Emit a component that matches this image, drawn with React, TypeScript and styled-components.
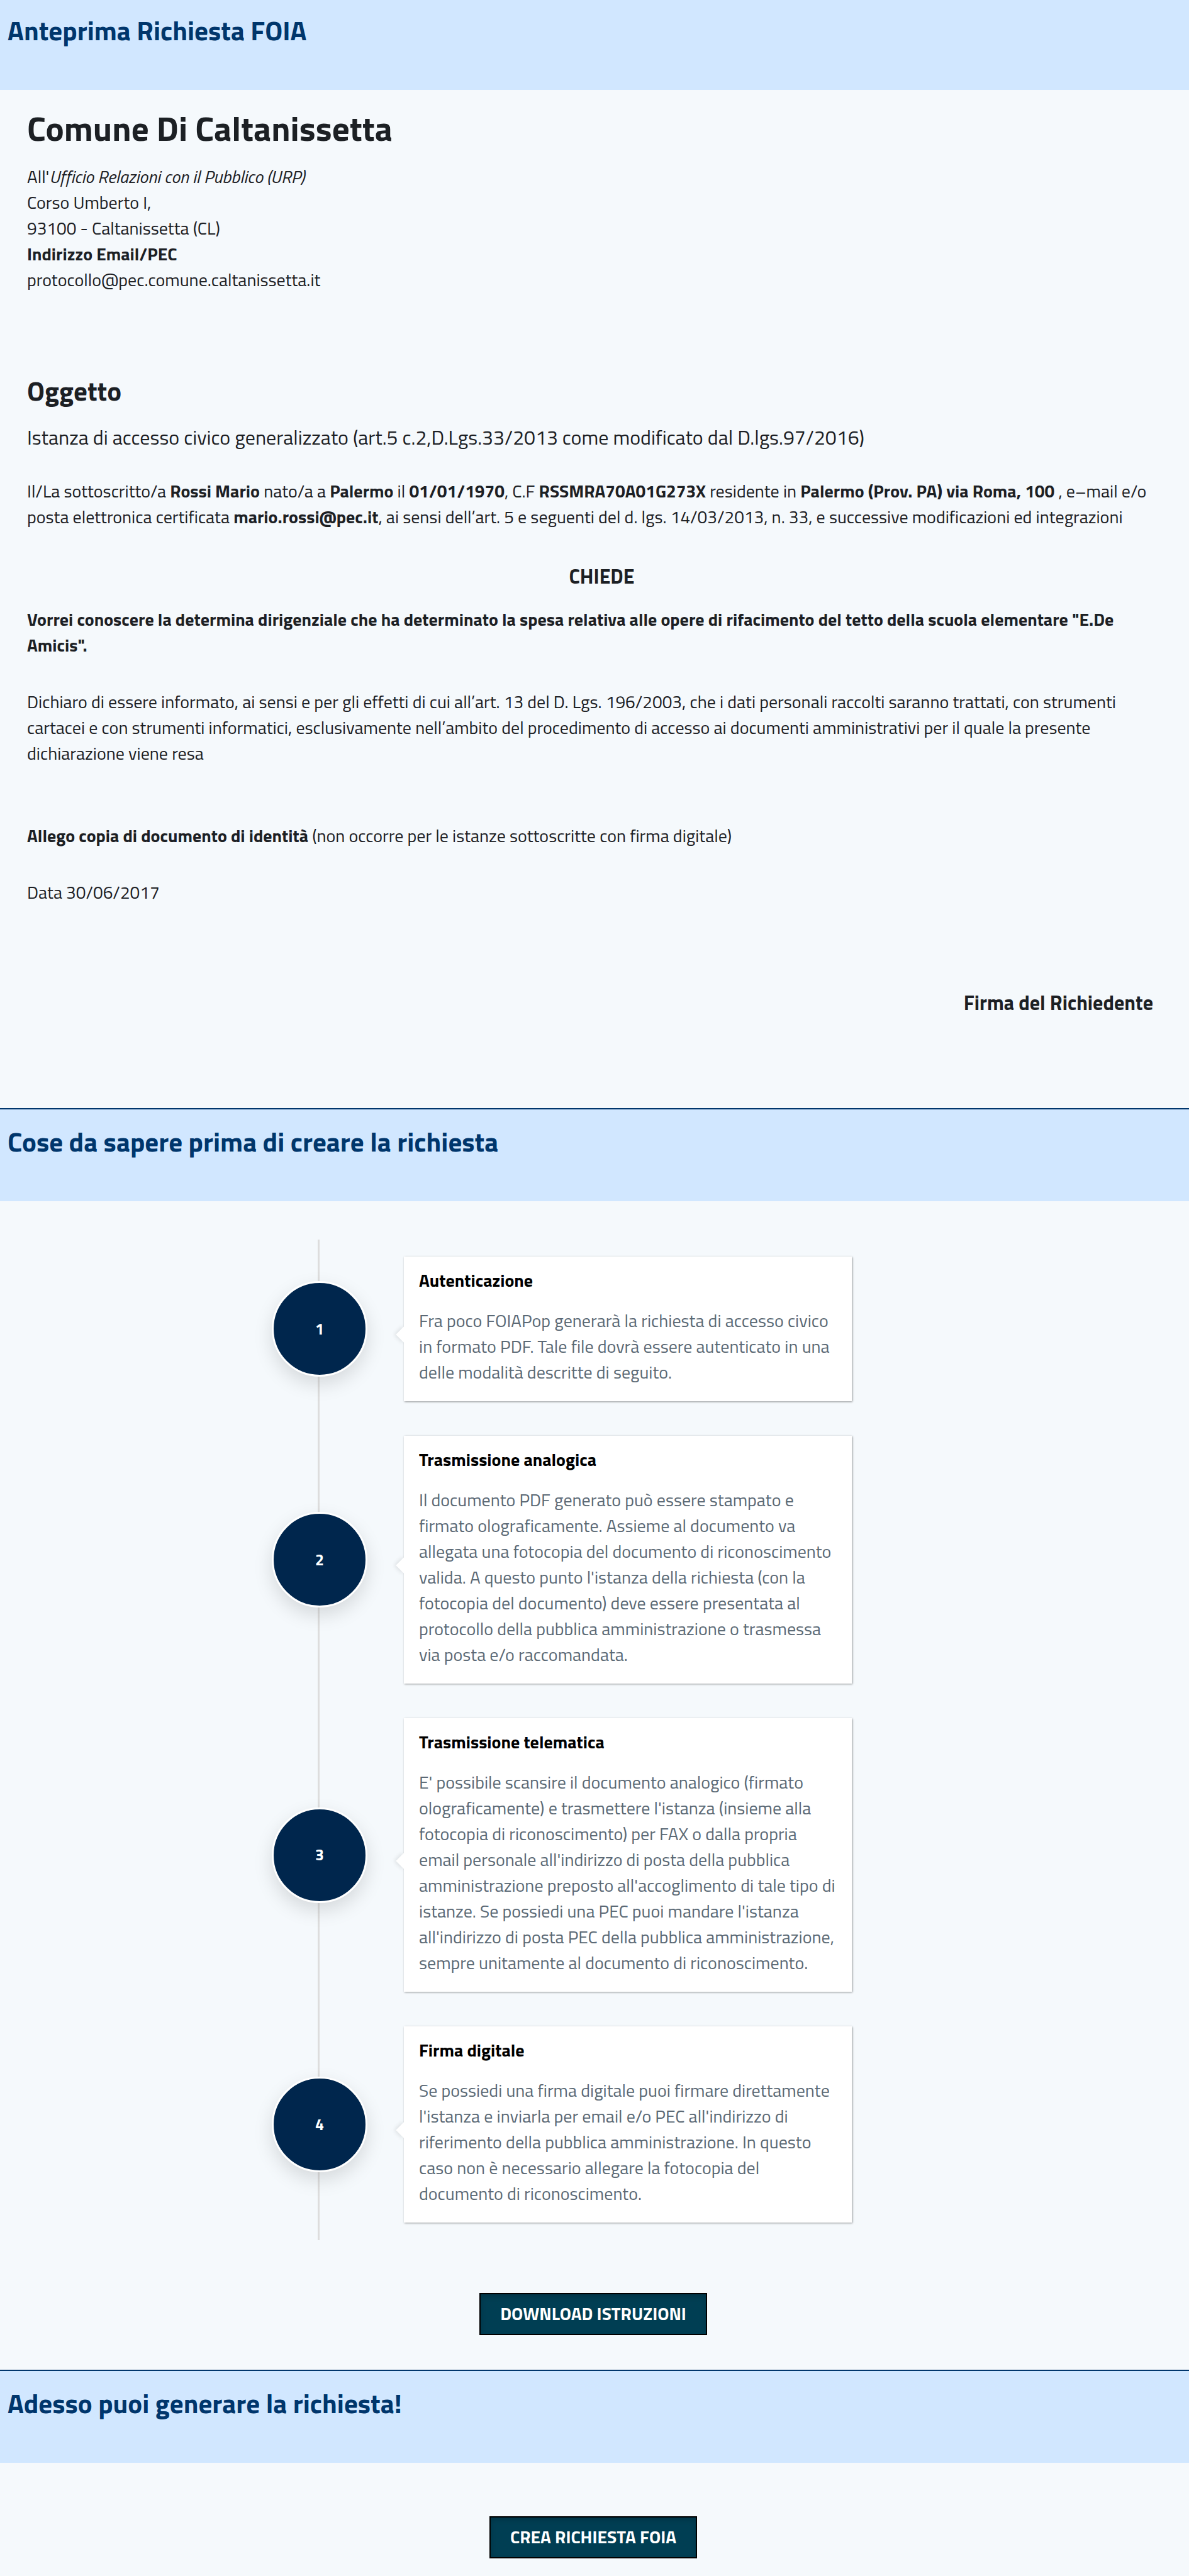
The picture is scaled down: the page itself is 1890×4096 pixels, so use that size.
import React from "react";
import styled, { createGlobalStyle } from "styled-components";

const GlobalStyle = createGlobalStyle`
  *, *::before, *::after { box-sizing: border-box; }
  body {
    margin: 0;
    background: #f5f9fc;
    color: #1c2024;
    font-family: "Titillium Web", Lato, "Open Sans", sans-serif;
    font-size: 28px;
    line-height: 41px;
  }
  h1, h2, h3, p, ol, address { margin: 0; padding: 0; }
  b { font-weight: 700; }
`;

const Banner = styled.header<{ $first?: boolean }>`
  padding: ${(p) => (p.$first ? "23px 12px 70px" : "26px 12px 70px")};
  border-top: ${(p) => (p.$first ? "0" : "2px solid #00366c")};
  background: #d1e7ff;
`;

const BannerTitle = styled.h2`
  color: #00366c;
  font-size: 43px;
  line-height: 50px;
  font-weight: 700;
`;

const Letter = styled.article`
  display: flex;
  flex-direction: column;
  padding: 26px 20px 147px 43px;
`;

const Recipient = styled.h1`
  margin-bottom: 22px;
  font-size: 55px;
  line-height: 69px;
  font-weight: 700;
`;

const Address = styled.address`
  margin-bottom: 130px;
  font-style: normal;
`;

const Subject = styled.h2`
  margin-bottom: 23px;
  font-size: 43px;
  line-height: 53px;
  font-weight: 700;
`;

const SubjectText = styled.p`
  margin-bottom: 41px;
  font-size: 32px;
  line-height: 48px;
`;

const Paragraph = styled.p<{ $gap: number; $bold?: boolean }>`
  margin-bottom: ${(p) => p.$gap}px;
  font-weight: ${(p) => (p.$bold ? 700 : 400)};
`;

const Claim = styled.h3`
  margin-bottom: 27px;
  font-size: 32px;
  line-height: 41px;
  font-weight: 700;
  text-align: center;
`;

const Signature = styled.p`
  padding-right: 37px;
  font-size: 32px;
  line-height: 41px;
  font-weight: 700;
  text-align: right;
`;

const Timeline = styled.ol`
  width: 1026px;
  margin: 61px auto 84px;
  list-style: none;
  background: linear-gradient(#dddddd, #dddddd) 73px 0 / 3px 100% no-repeat;
`;

const Step = styled.li`
  display: flex;
  align-items: center;
  gap: 58px;
  padding: 27px 104px 28px 0;
`;

const StepNumber = styled.span`
  display: flex;
  flex: none;
  align-items: center;
  justify-content: center;
  width: 152px;
  height: 152px;
  border: 3px solid #ffffff;
  border-radius: 50%;
  background: #00264d;
  box-shadow: 0 12px 30px rgba(0, 0, 0, 0.13);
  color: #ffffff;
  font-size: 25px;
  font-weight: 700;
`;

const Card = styled.section`
  position: relative;
  flex: 1;
  padding: 17px 24px 26px;
  background: #ffffff;
  box-shadow: 1px 1px 3px rgba(0, 0, 0, 0.4);

  &::before {
    content: "";
    position: absolute;
    top: 50%;
    left: -9px;
    width: 18px;
    height: 18px;
    background: #ffffff;
    box-shadow: -2px 2px 6px rgba(0, 0, 0, 0.1);
    clip-path: polygon(-12px -12px, 30px 30px, -12px 30px);
    transform: rotate(45deg);
  }
`;

const CardTitle = styled.h3`
  margin-bottom: 23px;
  color: #000000;
  font-size: 28px;
  line-height: 41px;
  font-weight: 700;
`;

const CardText = styled.p`
  color: #5b6975;
`;

const Actions = styled.div<{ $last?: boolean }>`
  display: flex;
  justify-content: center;
  padding: ${(p) => (p.$last ? "85px 4px 28px 0" : "0 4px 55px 0")};
`;

const ActionButton = styled.button`
  padding: 10px 31px 12px;
  border: 2px solid #000000;
  background: #003e53;
  box-shadow: inset 0 4px 8px rgba(0, 0, 0, 0.16);
  color: #ffffff;
  font-family: inherit;
  font-size: 28px;
  line-height: 41px;
  font-weight: 700;
  text-transform: uppercase;
  cursor: pointer;
`;

const steps = [
  {
    title: "Autenticazione",
    text: "Fra poco FOIAPop generarà la richiesta di accesso civico in formato PDF. Tale file dovrà essere autenticato in una delle modalità descritte di seguito.",
  },
  {
    title: "Trasmissione analogica",
    text: "Il documento PDF generato può essere stampato e firmato olograficamente. Assieme al documento va allegata una fotocopia del documento di riconoscimento valida. A questo punto l'istanza della richiesta (con la fotocopia del documento) deve essere presentata al protocollo della pubblica amministrazione o trasmessa via posta e/o raccomandata.",
  },
  {
    title: "Trasmissione telematica",
    text: "E' possibile scansire il documento analogico (firmato olograficamente) e trasmettere l'istanza (insieme alla fotocopia di riconoscimento) per FAX o dalla propria email personale all'indirizzo di posta della pubblica amministrazione preposto all'accoglimento di tale tipo di istanze. Se possiedi una PEC puoi mandare l'istanza all'indirizzo di posta PEC della pubblica amministrazione, sempre unitamente al documento di riconoscimento.",
  },
  {
    title: "Firma digitale",
    text: "Se possiedi una firma digitale puoi firmare direttamente l'istanza e inviarla per email e/o PEC all'indirizzo di riferimento della pubblica amministrazione. In questo caso non è necessario allegare la fotocopia del documento di riconoscimento.",
  },
];

export default function App() {
  return (
    <>
      <GlobalStyle />
      <main>
        <Banner $first>
          <BannerTitle>Anteprima Richiesta FOIA</BannerTitle>
        </Banner>
        <Letter>
          <Recipient>Comune Di Caltanissetta</Recipient>
          <Address>
            All'<i>Ufficio Relazioni con il Pubblico (URP)</i>
            <br />
            Corso Umberto I,
            <br />
            93100 - Caltanissetta (CL)
            <br />
            <b>Indirizzo Email/PEC</b>
            <br />
            protocollo@pec.comune.caltanissetta.it
          </Address>
          <Subject>Oggetto</Subject>
          <SubjectText>
            Istanza di accesso civico generalizzato (art.5 c.2,D.Lgs.33/2013 come modificato dal D.lgs.97/2016)
          </SubjectText>
          <Paragraph $gap={54}>
            Il/La sottoscritto/a <b>Rossi Mario</b> nato/a a <b>Palermo</b> il <b>01/01/1970</b>, C.F{" "}
            <b>RSSMRA70A01G273X</b> residente in <b>Palermo (Prov. PA) via Roma, 100</b> , e–mail e/o posta
            elettronica certificata <b>mario.rossi@pec.it</b>, ai sensi dell’art. 5 e seguenti del d. lgs.
            14/03/2013, n. 33, e successive modificazioni ed integrazioni
          </Paragraph>
          <Claim>CHIEDE</Claim>
          <Paragraph $gap={49} $bold>
            Vorrei conoscere la determina dirigenziale che ha determinato la spesa relativa alle opere di
            rifacimento del tetto della scuola elementare "E.De Amicis".
          </Paragraph>
          <Paragraph $gap={90}>
            Dichiaro di essere informato, ai sensi e per gli effetti di cui all’art. 13 del D. Lgs. 196/2003, che
            i dati personali raccolti saranno trattati, con strumenti cartacei e con strumenti informatici,
            esclusivamente nell’ambito del procedimento di accesso ai documenti amministrativi per il quale la
            presente dichiarazione viene resa
          </Paragraph>
          <Paragraph $gap={49}>
            <b>Allego copia di documento di identità</b> (non occorre per le istanze sottoscritte con firma
            digitale)
          </Paragraph>
          <Paragraph $gap={135}>Data 30/06/2017</Paragraph>
          <Signature>Firma del Richiedente</Signature>
        </Letter>

        <Banner>
          <BannerTitle>Cose da sapere prima di creare la richiesta</BannerTitle>
        </Banner>
        <Timeline>
          {steps.map((step, index) => (
            <Step key={step.title}>
              <StepNumber>{index + 1}</StepNumber>
              <Card>
                <CardTitle>{step.title}</CardTitle>
                <CardText>{step.text}</CardText>
              </Card>
            </Step>
          ))}
        </Timeline>
        <Actions>
          <ActionButton type="button">Download istruzioni</ActionButton>
        </Actions>

        <Banner>
          <BannerTitle>Adesso puoi generare la richiesta!</BannerTitle>
        </Banner>
        <Actions $last>
          <ActionButton type="button">Crea richiesta FOIA</ActionButton>
        </Actions>
      </main>
    </>
  );
}
